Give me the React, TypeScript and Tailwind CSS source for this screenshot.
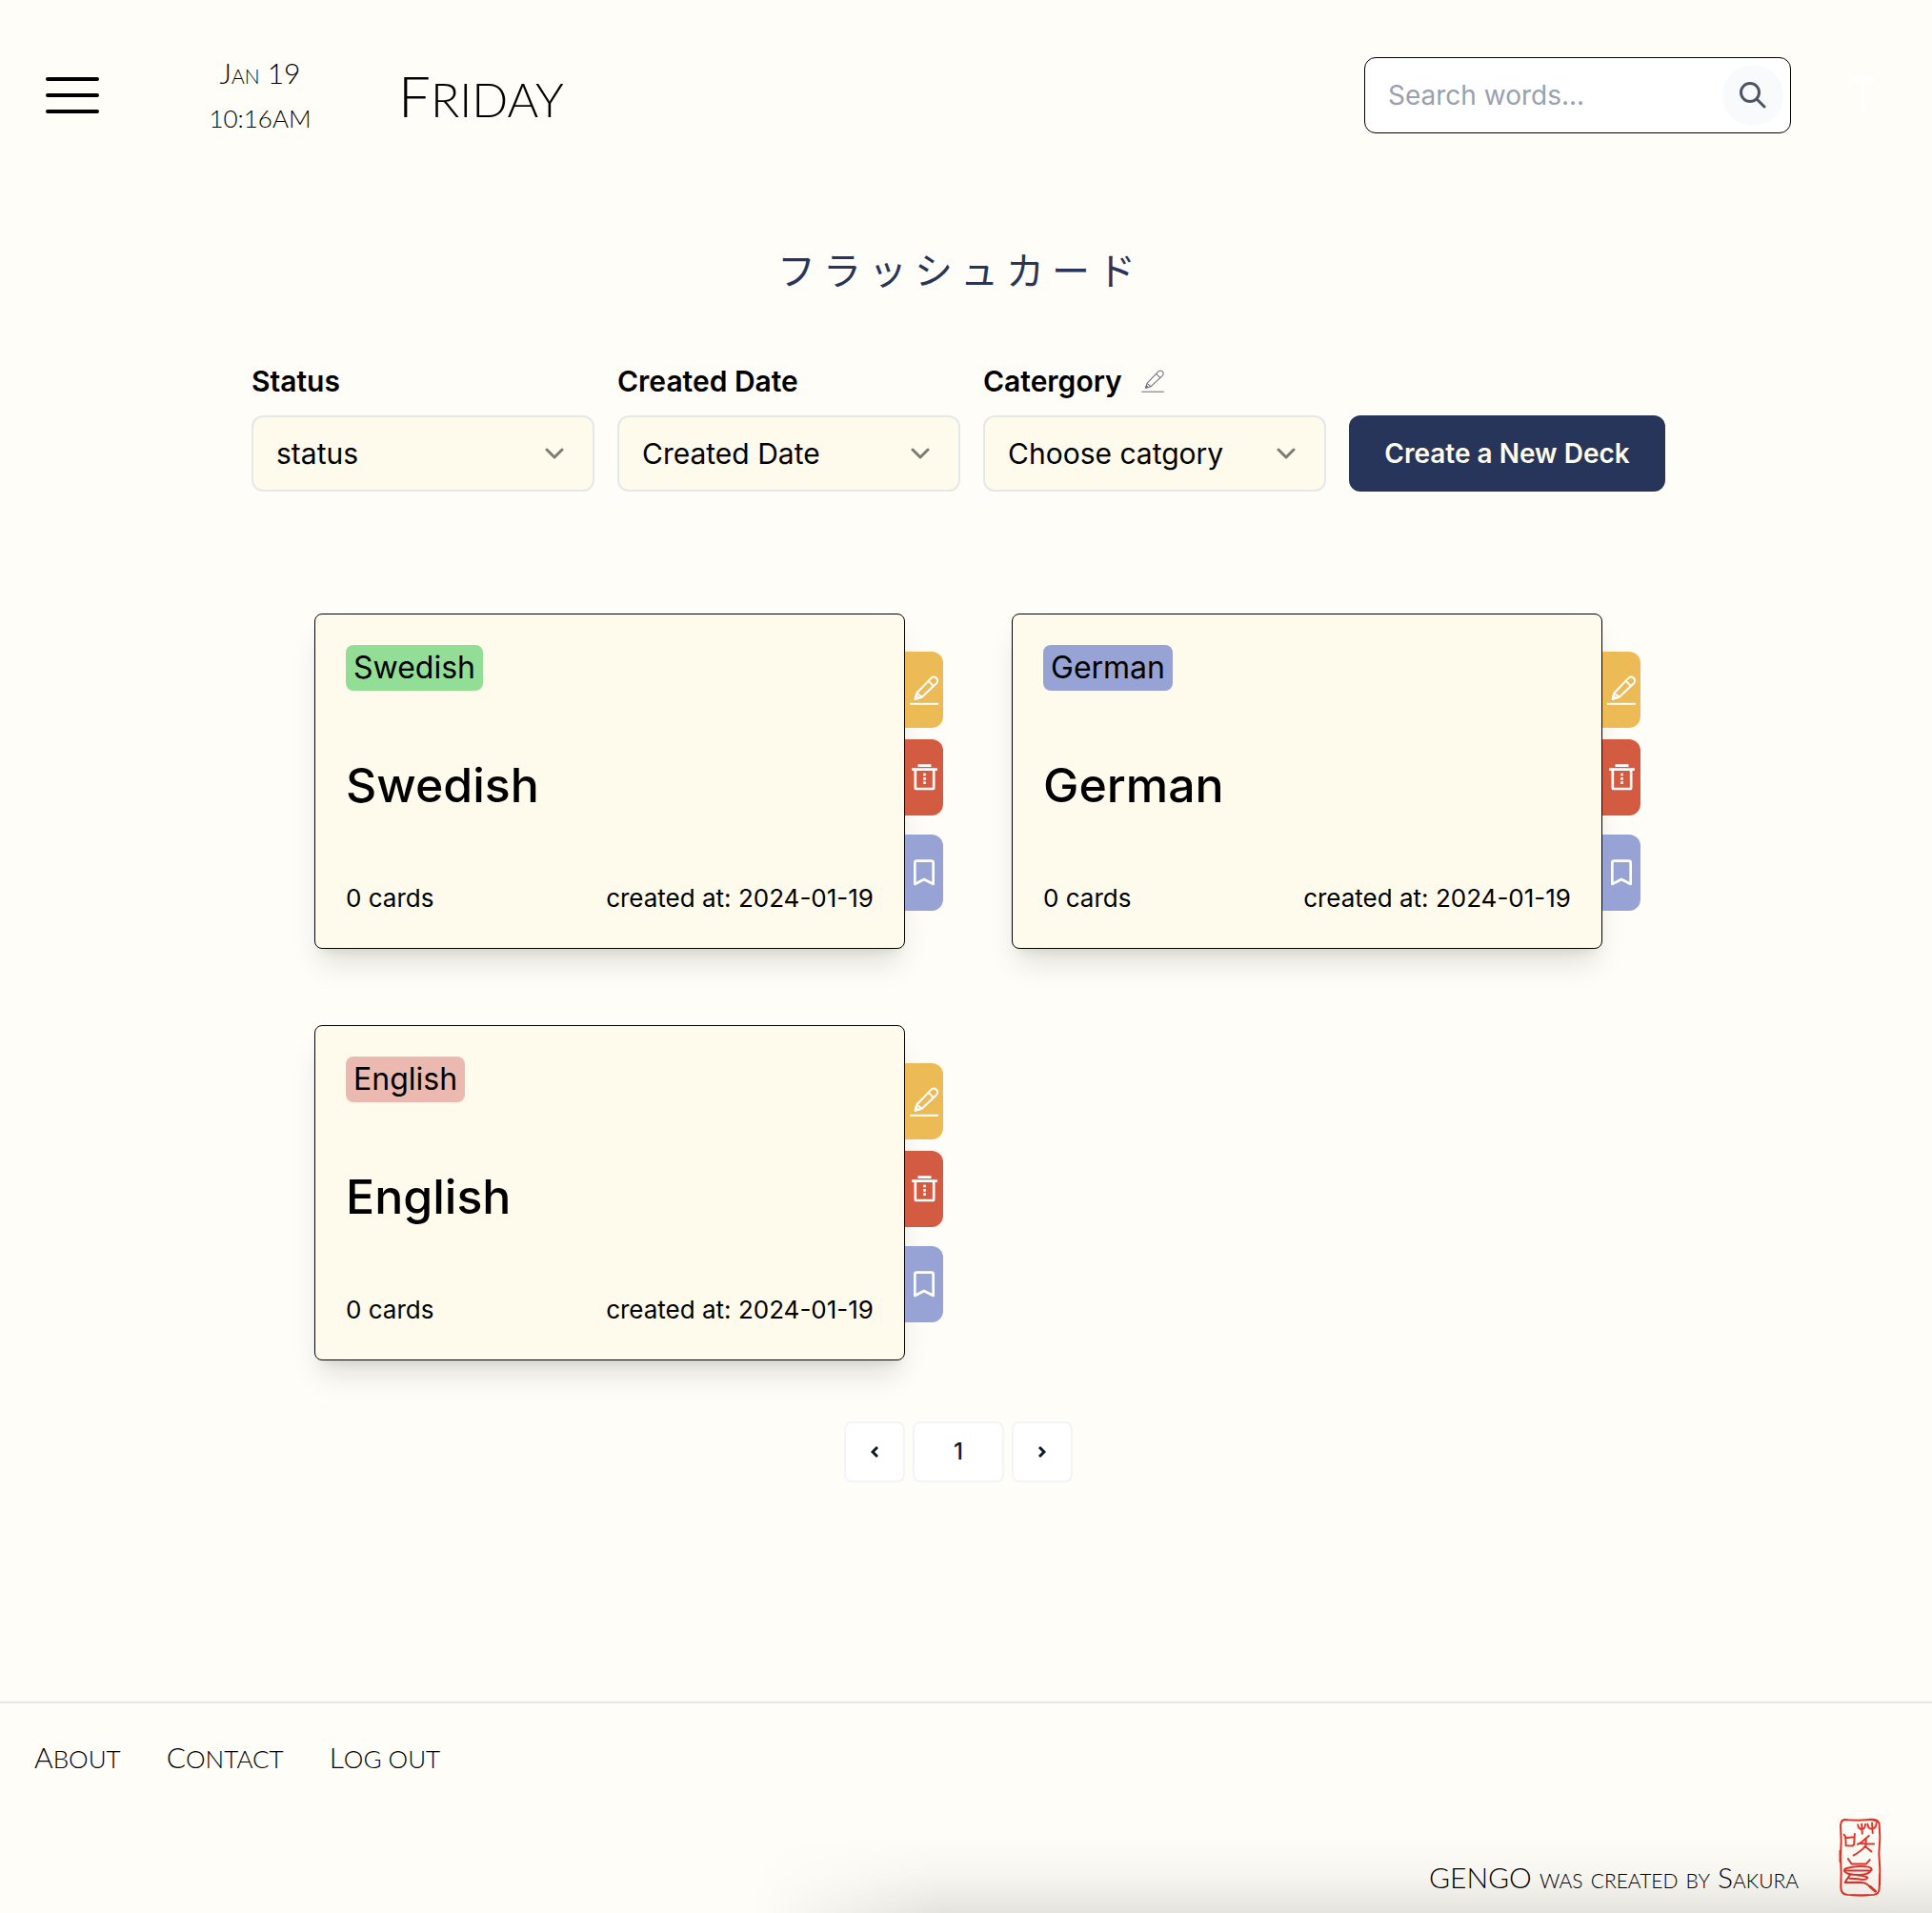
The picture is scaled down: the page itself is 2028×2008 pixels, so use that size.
import React from "react";

const PencilIcon = ({ className, strokeWidth }: { className: string; strokeWidth: number }) => (
  <svg viewBox="0 0 90 92" fill="none" stroke="currentColor" strokeWidth={strokeWidth} strokeLinejoin="round" className={className} aria-hidden="true">
    <path d="M17 74L22 55L67 8a11.500 11.500 0 0 1 17 16L38 68Z" />
    <path d="M59 17L75 33M22 55L38 68" />
    <path d="M17 74L19 64L27 71Z" fill="currentColor" />
    <path d="M0 89H90" />
  </svg>
);

const TrashIcon = () => (
  <svg viewBox="0 0 80 84" fill="none" stroke="currentColor" strokeWidth="8" className="h-7 w-[27px]" aria-hidden="true">
    <path d="M19 5H61M0 17H80M11 17V74a4 4 0 0 0 4 4H65a4 4 0 0 0 4-4V17" />
    <path d="M40 29V63" strokeDasharray="8 5" />
  </svg>
);

const BookmarkIcon = () => (
  <svg viewBox="0 0 66 82" fill="none" stroke="currentColor" strokeWidth="8" strokeLinejoin="round" className="h-7 w-[22px]" aria-hidden="true">
    <path d="M4 77V10a6 6 0 0 1 6-6H56a6 6 0 0 1 6 6V77L33 62Z" />
  </svg>
);

const SealIcon = () => (
  <svg viewBox="88 46 136 250" fill="none" stroke="#e3342b" strokeLinecap="round" strokeLinejoin="round" className="h-[83px] w-[45px]" role="img" aria-label="Sakura seal">
    <path strokeWidth="6" d="M108 52L150 54L196 51Q216 52 217 68L219 110L216 160L219 210L217 270Q216 288 200 290L160 292L116 290Q96 288 95 268L96 220L94 170L96 120L94 70Q95 54 108 52Z" />
    <path strokeWidth="5" d="M96 60Q98 50 112 51M188 50L212 58M92 150V185M219 225V258M130 292H182" />
    <g strokeWidth="6">
      <path d="M149 68Q151 82 161 82Q172 82 173 66M161 66L163 96M180 66Q182 82 193 80Q207 80 208 62M194 62L196 94" />
      <path d="M105 99L110 106L111 134L132 135L137 130L139 97M109 110L138 107" />
      <path d="M184 103Q168 116 160 124L148 130M154 127L200 129M175 112L174 134Q160 152 135 165M172 136L192 153" />
      <path d="M118 176L129 192H176L187 179" />
      <path d="M114 206Q136 200 156 200Q192 200 193 210Q184 226 152 227Q112 227 106 214Q106 208 114 206Z" />
      <path d="M112 213H188" />
      <path d="M124 227Q114 240 108 251L150 250Q178 250 186 264L204 279M148 228Q172 230 180 236Q172 246 150 240L122 238" />
      <path strokeWidth="8" d="M188 264L205 279" />
    </g>
  </svg>
);

const Field = ({ id, label, option, children }: { id: string; label: string; option: string; children?: React.ReactNode }) => (
  <div className="w-[360px]">
    <div className="mb-4 flex h-10 items-center gap-5">
      <label htmlFor={id} className="text-[30px] leading-10 font-semibold text-black">{label}</label>
      {children}
    </div>
    <div className="relative">
      <select id={id} className="h-20 w-full appearance-none rounded-xl border-2 border-gray-200 bg-[#fefbec] pr-16 pl-6 text-[30px] text-black">
        <option>{option}</option>
      </select>
      <svg viewBox="0 0 20 12" fill="none" stroke="#7d7c74" strokeWidth="3" strokeLinecap="round" strokeLinejoin="round" className="pointer-events-none absolute top-[34px] right-8 h-3 w-5" aria-hidden="true">
        <path d="M2 2L10 10L18 2" />
      </svg>
    </div>
  </div>
);

const tab = "flex h-20 w-10 items-center justify-center rounded-r-xl text-white";

const DeckCard = ({ name, tagColor }: { name: string; tagColor: string }) => (
  <article className="relative">
    <div className="flex h-[352px] flex-col justify-between rounded-lg border border-black bg-[#fefbec] p-8 text-black shadow-[0_20px_30px_-6px_rgba(0,0,0,0.12),0_8px_12px_-8px_rgba(0,0,0,0.12)]">
      <span className={"self-start rounded-lg px-2 text-[32px] leading-[48px] " + tagColor}>{name}</span>
      <h2 className="text-[50px] leading-[72px] font-medium">{name}</h2>
      <div className="flex justify-between text-[26px] leading-10">
        <span>0 cards</span>
        <span>created at: 2024-01-19</span>
      </div>
    </div>
    <div className="absolute top-10 left-full flex flex-col">
      <button aria-label={"Edit " + name} className={tab + " bg-[#ecbb55]"}>
        <PencilIcon className="h-[31px] w-[30px]" strokeWidth={6} />
      </button>
      <button aria-label={"Delete " + name} className={tab + " mt-3 bg-[#d25b41]"}>
        <TrashIcon />
      </button>
      <button aria-label={"Bookmark " + name} className={tab + " mt-5 bg-[#96a3d4]"}>
        <BookmarkIcon />
      </button>
    </div>
  </article>
);

const decks = [
  { name: "Swedish", tagColor: "bg-[#92de97]" },
  { name: "German", tagColor: "bg-[#96a3d4]" },
  { name: "English", tagColor: "bg-[#ebb9b0]" },
];

const pageButton = "flex h-16 items-center justify-center rounded-lg border-2 border-gray-100 bg-white text-[24px] font-medium text-gray-900";

const footerLink = "block text-[26px] uppercase first-letter:text-[30px]";

export default function App() {
  return (
    <div className="relative flex min-h-screen flex-col bg-[#fffdf7] font-['Inter',sans-serif]">
      <header className="flex h-[200px] items-start pt-[52px] pr-16 pl-12 text-black">
        <button aria-label="Open menu" className="flex h-24 w-14 items-center">
          <svg viewBox="0 0 56 40" stroke="currentColor" strokeWidth="4" strokeLinecap="round" className="h-10 w-14" aria-hidden="true">
            <path d="M2 3H54M2 20H54M2 37H54" />
          </svg>
        </button>
        <div className="ml-[104px] w-[130px] text-center font-['Lato',sans-serif] font-light">
          <p className="text-[30px] leading-[48px] [font-variant-caps:small-caps]">Jan 19</p>
          <p className="text-[26px] leading-[48px]">10:16AM</p>
        </div>
        <p className="ml-20 font-['Lato',sans-serif] text-[50px] leading-[96px] font-light uppercase first-letter:text-[60px]">Friday</p>
        <form className="relative mt-2 ml-auto w-[448px]" onSubmit={(e) => e.preventDefault()}>
          <input type="text" aria-label="Search words" placeholder="Search words..." className="h-20 w-full rounded-xl border border-black bg-white pr-20 pl-6 text-[28px] text-black placeholder:text-gray-400" />
          <button aria-label="Search" className="absolute top-2 right-2 flex size-16 items-center justify-center rounded-full bg-gray-50 text-gray-600">
            <svg viewBox="0 0 28 28" fill="none" stroke="currentColor" strokeWidth="3" strokeLinecap="round" className="size-7" aria-hidden="true">
              <circle cx="11" cy="11" r="9.500" />
              <path d="M18 18L26 26" />
            </svg>
          </button>
        </form>
        <span className="ml-[60px] w-6 text-center text-[48px] leading-[96px] text-white">T</span>
      </header>

      <main className="flex flex-1 flex-col items-center pr-4">
        <h1 className="mt-[50px] mb-[2px] pl-1 font-['Noto_Sans_CJK_JP',sans-serif] text-[40px] leading-[64px] tracking-[8px] text-[#28355b]">フラッシュカード</h1>

        <div className="mt-16 flex items-end gap-6">
          <Field id="status" label="Status" option="status" />
          <Field id="created" label="Created Date" option="Created Date" />
          <Field id="category" label="Catergory" option="Choose catgory">
            <button aria-label="Edit categories" className="text-gray-500">
              <PencilIcon className="size-6" strokeWidth={4} />
            </button>
          </Field>
          <button className="h-20 w-[332px] rounded-xl bg-[#28355b] text-[28px] font-semibold text-[#fefbec]">Create a New Deck</button>
        </div>

        <section className="mt-32 grid w-full max-w-[1352px] grid-cols-2 gap-x-28 gap-y-20">
          {decks.map((d) => (
            <DeckCard key={d.name} name={d.name} tagColor={d.tagColor} />
          ))}
        </section>

        <nav aria-label="Pagination" className="mt-16 flex gap-2">
          <button aria-label="Previous page" className={pageButton + " w-16"}>
            <svg viewBox="0 0 8 14" fill="none" stroke="currentColor" strokeWidth="3" className="h-[14px] w-2" aria-hidden="true"><path d="M7 2L2 7L7 12" /></svg>
          </button>
          <button className={pageButton + " w-24"}>1</button>
          <button aria-label="Next page" className={pageButton + " w-16"}>
            <svg viewBox="0 0 8 14" fill="none" stroke="currentColor" strokeWidth="3" className="h-[14px] w-2" aria-hidden="true"><path d="M1 2L6 7L1 12" /></svg>
          </button>
        </nav>
      </main>

      <footer className="relative h-[222px] border-t-2 border-gray-200 font-['Lato',sans-serif] font-light text-black">
        <div className="pointer-events-none absolute right-0 bottom-0 h-20 w-[61%] bg-gradient-to-t from-black/10 via-black/3 to-transparent [mask-image:linear-gradient(to_right,transparent,black_16%)]" />
        <nav aria-label="Footer" className="flex gap-12 px-9 pt-8 leading-[48px]">
          <a href="#about" className={footerLink}>About</a>
          <a href="#contact" className={footerLink}>Contact</a>
          <a href="#logout" className={footerLink}>Log out</a>
        </nav>
        <div className="mt-[38px] flex items-start justify-end gap-[42px] pr-[53px]">
          <p className="mt-[42px] text-[30px] leading-10 [font-variant-caps:small-caps]">GENGO was created by Sakura</p>
          <SealIcon />
        </div>
      </footer>
    </div>
  );
}
